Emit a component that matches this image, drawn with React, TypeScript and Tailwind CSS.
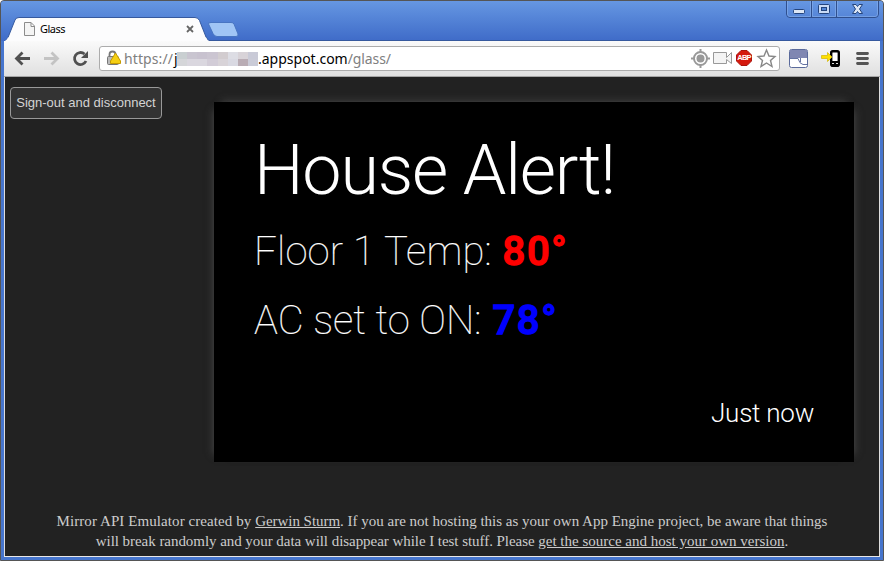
import React from "react";

const TitleBar = () => (
  <div className="relative h-[40px] shrink-0 bg-linear-to-b from-[#6697e2] to-[#3f6bc8]">
    <svg className="absolute left-0 top-0" width="884" height="40" viewBox="0 0 884 40">
      <path d="M4 40.500 Q7 39 8 36.500 L15 19 Q16 16.500 19 16.500 H195 Q198 16.500 199.500 19.500 L206 36 Q207.500 40 211 40.500 Z" fill="#fcfcfd" stroke="#36599e" />
      <path d="M205 39.500 H880" stroke="#36599e" />
      <path d="M4 40.500 Q7 39 8 36.500 H206 Q207.500 40 211 40.500Z" fill="#fcfcfd" />
      <path d="M210 21.500 H231 Q233.500 21.500 234 23 L238 33 Q238.500 35.500 236 35.500 H217 Q214.500 35.500 213 32.500 L208.500 23 Q208 21.500 211 21.500Z" fill="#a0c5f5" stroke="#4875c2" />
      <path d="M24.500 21.500 H31 L34.500 25 V34.500 H24.500Z M31 21.500 V25.500 H34.500" fill="#f4f4f4" stroke="#8c8c8c" />
      <path d="M187 25 L193 31 M193 25 L187 31" stroke="#666" strokeWidth="1.800" />
      <path d="M786.500 0 V13 Q786.500 16.500 790 16.500 H875 Q878.500 16.500 878.500 13 V0 M811.500 0 V16 M836.500 0 V16" fill="none" stroke="#2f4f8e" />
      <path d="M787.500 0 V13 Q787.500 15.500 790 15.500 H810.500 V0 M812.500 0 V15.500 H835.500 V0 M837.500 0 V15.500 H875 Q877.500 15.500 877.500 13 V0" fill="none" stroke="#86aeea" strokeOpacity=".65" />
      <rect x="793.500" y="8.500" width="11" height="4" rx="1" fill="#dce6f5" stroke="#24457e" />
      <rect x="818.500" y="3.500" width="11" height="9" rx="1" fill="#c8daf5" stroke="#24457e" />
      <rect x="821.500" y="6.500" width="5" height="3" fill="#5285d5" stroke="#24457e" />
      <path d="M852.500 3.500 H856 L857.500 5.500 L859 3.500 H862.500 L859.500 8 L862.500 12.500 H859 L857.500 10.500 L856 12.500 H852.500 L855.500 8Z" fill="#dce6f5" stroke="#24457e" />
    </svg>
    <span className="absolute left-[40px] top-[20px] text-[11px] leading-[16px] tracking-[-0.5px] text-black font-['Noto_Sans',sans-serif]">Glass</span>
  </div>
);

const pixels = [
  ["#c9cfd1", "#c9c5d0", "#c8c2cf", "#cbc5d1", "#d2cccf", "#dddde4", "#d8d3d8", "#c9cad7"],
  ["#d5d6d9", "#dad7df", "#dad7df", "#d2ccd7", "#d8d3d8", "#d9d9e2", "#b9acb4", "#cacbd7"],
];

const Toolbar = () => (
  <div className="relative flex h-[36px] shrink-0 border-b border-[#a5a5a5] bg-linear-to-b from-[#fafafa] to-[#e0e0e0]">
    <div className="ml-[95px] mt-[5px] flex h-[25px] w-[681px] items-center rounded-[3px] border border-[#acacac] bg-white pl-[24px] font-['Noto_Sans',sans-serif] text-[14px] leading-[20px] text-[#808080]">
      <span className="w-[50px] whitespace-nowrap tracking-[0.1px]">https://</span>
      <span className="w-[3px] text-black">j</span>
      <span className="grid h-[14px] w-[81px] grid-cols-8">
        {pixels.flat().map((color, i) => <i key={i} style={{ background: color }} />)}
      </span>
      <span className="whitespace-nowrap text-black">.appspot.com</span>
      <span className="tracking-[-0.1px]">/glass/</span>
    </div>
    <svg className="absolute -left-[4px] top-0" width="884" height="35" viewBox="0 41 884 35">
      <path d="M30 58.500 H17 M22.500 52.500 L16.500 58.500 L22.500 64.500" fill="none" stroke="#505050" strokeWidth="2.800" />
      <path d="M44 58.500 H57 M51.500 52.500 L57.500 58.500 L51.500 64.500" fill="none" stroke="#c3c3c3" strokeWidth="2.800" />
      <path d="M86 61 A6 6 0 1 1 84.500 54" fill="none" stroke="#505050" strokeWidth="2.800" />
      <path d="M88 51 V58 H81Z" fill="#505050" />
      <path d="M109.500 57 V54.500 Q109.500 51.500 112.500 51.500 Q115.500 51.500 115.500 54.500 V57" fill="none" stroke="#777" strokeWidth="1.800" />
      <rect x="107.500" y="56.500" width="11" height="8" rx="1" fill="#bbb" stroke="#777" />
      <path d="M115.500 53 L120.500 61 V63.500 H110.500 V61Z" fill="#f5cf13" stroke="#c49b00" strokeLinejoin="round" />
      <circle cx="700.500" cy="58.500" r="6.500" fill="none" stroke="#999" strokeWidth="2" />
      <circle cx="700.500" cy="58.500" r="4" fill="#999" />
      <path d="M700.500 49 V53 M700.500 64 V68 M691 58.500 H695 M706 58.500 H710" stroke="#999" strokeWidth="2" />
      <path d="M713.500 52.500 H726.500 V57.500 L731.500 52.500 V63.500 L726.500 59.500 V63.500 H713.500Z" fill="#f4f4f4" stroke="#999" />
      <path d="M741 50.500 H747 L751.500 55 V61 L747 65.500 H741 L736.500 61 V55Z" fill="#d5190d" stroke="#aa150d" />
      <path d="M766.500 50 L769 56 L775 56.500 L770.500 60.500 L772 66.500 L766.500 63 L761 66.500 L762.500 60.500 L758 56.500 L764 56Z" fill="#fff" stroke="#888" strokeWidth="1.400" />
      <rect x="789.500" y="49.500" width="18" height="18" rx="2" fill="#fff" stroke="#5a6a9b" />
      <path d="M790 50 H807 V58 H790Z" fill="#8087b2" />
      <path d="M790 58.500 H798 Q799.500 64 803 64.500 H807 M800.500 58 V62" fill="none" stroke="#6573a2" />
      <rect x="831.200" y="51.200" width="7.600" height="14.600" rx="1.500" fill="#fff" stroke="#000" strokeWidth="2.400" />
      <path d="M831 61 H839 V66.500 H831Z" fill="#000" />
      <path d="M832 63.500 H834 M836 63.500 H838" stroke="#ddd" />
      <path d="M821.500 55.500 H827.500 V52.500 L832 57 L827.500 61.500 V58.500 H821.500Z" fill="#ffe000" stroke="#d1b400" strokeWidth=".7" />
      <path d="M857.500 53.500 H867.500 M857.500 58.500 H867.500 M857.500 63.500 H867.500" stroke="#555" strokeWidth="2.800" strokeLinecap="round" />
    </svg>
    <span className="absolute left-[732px] top-[12px] w-[16px] text-center text-[7.5px] font-bold leading-[10px] tracking-[-0.8px] text-white font-['Liberation_Sans',sans-serif]">ABP</span>
  </div>
);

const line = "block whitespace-nowrap";

export default function App() {
  return (
    <div className="h-[561px] w-[884px] overflow-hidden rounded-t-[4px] border border-[#555] bg-[#4675cd]">
      <div className="-mx-px -mt-px flex h-[560px] flex-col">
        <div className="h-px shrink-0 bg-[#3d4655]" />
        <TitleBar />
        <div className="mx-[4px] flex h-[516px] flex-col border-b border-[#e8e8e8] bg-[#222]">
          <Toolbar />
          <main className="flex h-[480px] flex-col border-x border-[#dedede] bg-[#222]">
            <div className="flex h-[384px]">
              <button className="ml-[5px] mt-[10px] h-[32px] w-[152px] whitespace-nowrap rounded-[4px] border border-[#999] bg-[#333] text-[13px] leading-[18px] text-[#d4d4d4] font-['Liberation_Sans',Arial,sans-serif]">Sign-out and disconnect</button>
              <section className="ml-[52px] mt-[25px] h-[360px] w-[640px] bg-black pl-[40px] pt-[27px] font-['Roboto',sans-serif] text-white shadow-[-8px_0_8px_-8px_#4c4c4c,8px_0_8px_-8px_#4c4c4c,0_-8px_8px_-8px_#4c4c4c]">
                <h1 className={`${line} h-[84px] text-[70px] font-light leading-[82px] tracking-[-1.2px]`}>House Alert!</h1>
                <p className={`${line} h-[69px] pt-[15px] text-[40px] font-thin leading-[48px] tracking-[0.15px] [-webkit-text-stroke:0.2px]`}>Floor 1 Temp: <b className="ml-px font-medium tracking-[1.7px] text-[#f00] [-webkit-text-stroke:1.3px]">80°</b></p>
                <p className={`${line} h-[69px] pt-[15px] text-[40px] font-thin leading-[48px] [-webkit-text-stroke:0.2px]`}>AC set to ON: <b className="ml-[1.5px] font-medium tracking-[1.7px] text-[#00f] [-webkit-text-stroke:1.3px]">78°</b></p>
                <p className={`${line} mr-[40px] mt-[46px] text-right text-[26px] font-light leading-[32px] tracking-[-0.25px]`}>Just now</p>
              </section>
            </div>
            <footer className="mt-[50px] text-center text-[15px] leading-[20px] text-[#ccc] font-['Liberation_Serif','Times_New_Roman',serif]">
              <span className={line}><span className="tracking-[0.08px]">Mirror API Emulator created by </span><u className="tracking-[-0.05px]">Gerwin Sturm</u>. If you are not hosting this as your own App Engine project, be aware that things</span>
              <span className={line}><span className="tracking-[-0.05px]">will break randomly and your data will disappear while I test stuff. Please </span><u>get the source and host your own version</u>.</span>
            </footer>
          </main>
        </div>
      </div>
    </div>
  );
}
